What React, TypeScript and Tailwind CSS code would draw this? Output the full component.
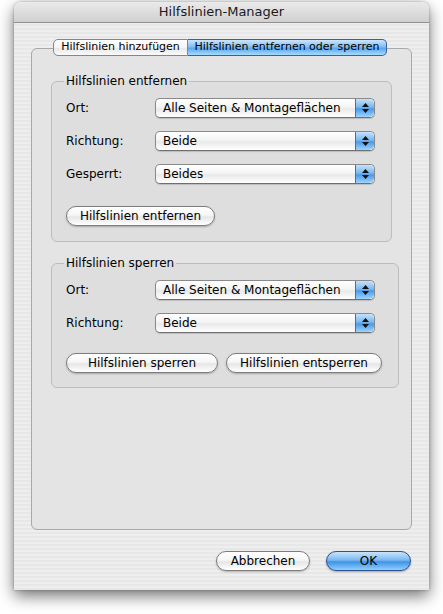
import React from 'react';

const font = "font-['DejaVu_Sans','Liberation_Sans',sans-serif]";

const Stepper: React.FC = () => (
  <div className="w-[19px] h-full rounded-r-[5px] border-l border-[#4a6da8] bg-[linear-gradient(to_bottom,#c6e1fb_0%,#7bb8ef_45%,#4a9ae8_55%,#9fd4ff_100%)] flex flex-col items-center justify-center gap-[2px]">
    <svg width="7" height="4" viewBox="0 0 7 4"><path d="M3.5 0 L7 4 L0 4 Z" fill="#111" /></svg>
    <svg width="7" height="4" viewBox="0 0 7 4"><path d="M0 0 L7 0 L3.5 4 Z" fill="#111" /></svg>
  </div>
);

const Select: React.FC<{ value: string }> = ({ value }) => (
  <div className="w-[220px] h-[20px] flex items-stretch rounded-[5px] border border-[#8a8a8a] border-b-[#6f6f6f] bg-[linear-gradient(to_bottom,#ffffff_0%,#f4f4f4_45%,#e9e9e9_55%,#ffffff_100%)] shadow-[0_1px_1px_rgba(0,0,0,0.15)] overflow-hidden">
    <span className="flex-1 pl-[7px] text-[12px] leading-[18px] text-black">{value}</span>
    <Stepper />
  </div>
);

const Row: React.FC<{ label: string; value: string }> = ({ label, value }) => (
  <div className="flex items-center h-[20px]">
    <span className="w-[89px] text-[12px] text-black">{label}</span>
    <Select value={value} />
  </div>
);

const Button: React.FC<{ label: string; w: string; blue?: boolean }> = ({ label, w, blue }) => (
  <button
    className={
      blue
        ? `${w} h-[20px] rounded-full border border-[#2f4f8f] bg-[linear-gradient(to_bottom,#c9e4fc_0%,#78b8f2_45%,#3f93e6_55%,#8fd0ff_100%)] text-[12px] text-black shadow-[0_1px_2px_rgba(0,0,0,0.3)] ${font}`
        : `${w} h-[20px] rounded-full border border-[#7d7d7d] bg-[linear-gradient(to_bottom,#ffffff_0%,#f6f6f6_45%,#e6e6e6_55%,#ffffff_100%)] text-[12px] text-black shadow-[0_1px_2px_rgba(0,0,0,0.25)] ${font}`
    }
  >
    {label}
  </button>
);

const Group: React.FC<{ title: string; children: React.ReactNode }> = ({ title, children }) => (
  <fieldset className="border border-[#bdbdbd] rounded-[6px] pl-[14px] pr-[16px] pb-[14px] bg-black/[0.025]">
    <legend className="px-[2px] -ml-[2px] text-[12px] text-black leading-[15px]">{title}</legend>
    {children}
  </fieldset>
);

export default function App() {
  return (
    <div className={`w-[443px] h-[614px] bg-white pl-[14px] pt-[2px] ${font}`}>
      <div className="w-[415px] h-[588px] rounded-t-[7px] flex flex-col shadow-[0_6px_16px_rgba(0,0,0,0.55),0_0_3px_rgba(0,0,0,0.3)] bg-[repeating-linear-gradient(to_bottom,#eeeeee_0px,#eeeeee_2px,#e7e7e7_2px,#e7e7e7_4px)]">
        {/* Title bar */}
        <div className="h-[21px] rounded-t-[7px] border-b border-[#8f8f8f] bg-[linear-gradient(to_bottom,#eaeaea,#d0d0d0)] flex items-center justify-center text-[13px] text-[#1a1a1a]">
          Hilfslinien-Manager
        </div>

        {/* Body */}
        <div className="flex-1 flex flex-col px-[17px] pt-[16px] pb-[19px]">
          {/* Tabs */}
          <div className="flex justify-center relative z-10 pr-[3px]">
            <div className="w-[135px] h-[17px] flex items-center justify-center rounded-l-[5px] border border-[#868686] bg-[linear-gradient(to_bottom,#ffffff_0%,#f5f5f5_50%,#e8e8e8_55%,#fafafa_100%)] text-[11px] text-black">
              Hilfslinien hinzufügen
            </div>
            <div className="w-[199px] h-[17px] flex items-center justify-center rounded-r-[5px] border border-[#3d5f97] border-l-0 bg-[linear-gradient(to_bottom,#cde6fc_0%,#83bff2_45%,#5aa7ee_55%,#a6dcff_100%)] text-[11px] text-black">
              Hilfslinien entfernen oder sperren
            </div>
          </div>

          {/* Tab pane */}
          <div className="-mt-[8px] h-[482px] rounded-[6px] border border-[#a9a9a9] bg-[#e4e4e4] px-[19px] pt-[25px] flex flex-col gap-[14px]">
            <Group title="Hilfslinien entfernen">
              <div className="flex flex-col gap-[13px] mt-[9px]">
                <Row label="Ort:" value="Alle Seiten & Montageflächen" />
                <Row label="Richtung:" value="Beide" />
                <Row label="Gesperrt:" value="Beides" />
              </div>
              <div className="mt-[19px]">
                <Button label="Hilfslinien entfernen" w="w-[149px]" />
              </div>
            </Group>

            <Group title="Hilfslinien sperren">
              <div className="flex flex-col gap-[13px] mt-[9px]">
                <Row label="Ort:" value="Alle Seiten & Montageflächen" />
                <Row label="Richtung:" value="Beide" />
              </div>
              <div className="mt-[20px] flex gap-[8px]">
                <Button label="Hilfslinien sperren" w="w-[152px]" />
                <Button label="Hilfslinien entsperren" w="w-[156px]" />
              </div>
            </Group>
          </div>

          {/* Footer buttons */}
          <div className="mt-auto flex justify-end gap-[16px] pr-[1px]">
            <Button label="Abbrechen" w="w-[94px]" />
            <Button label="OK" w="w-[85px]" blue />
          </div>
        </div>
      </div>
    </div>
  );
}
